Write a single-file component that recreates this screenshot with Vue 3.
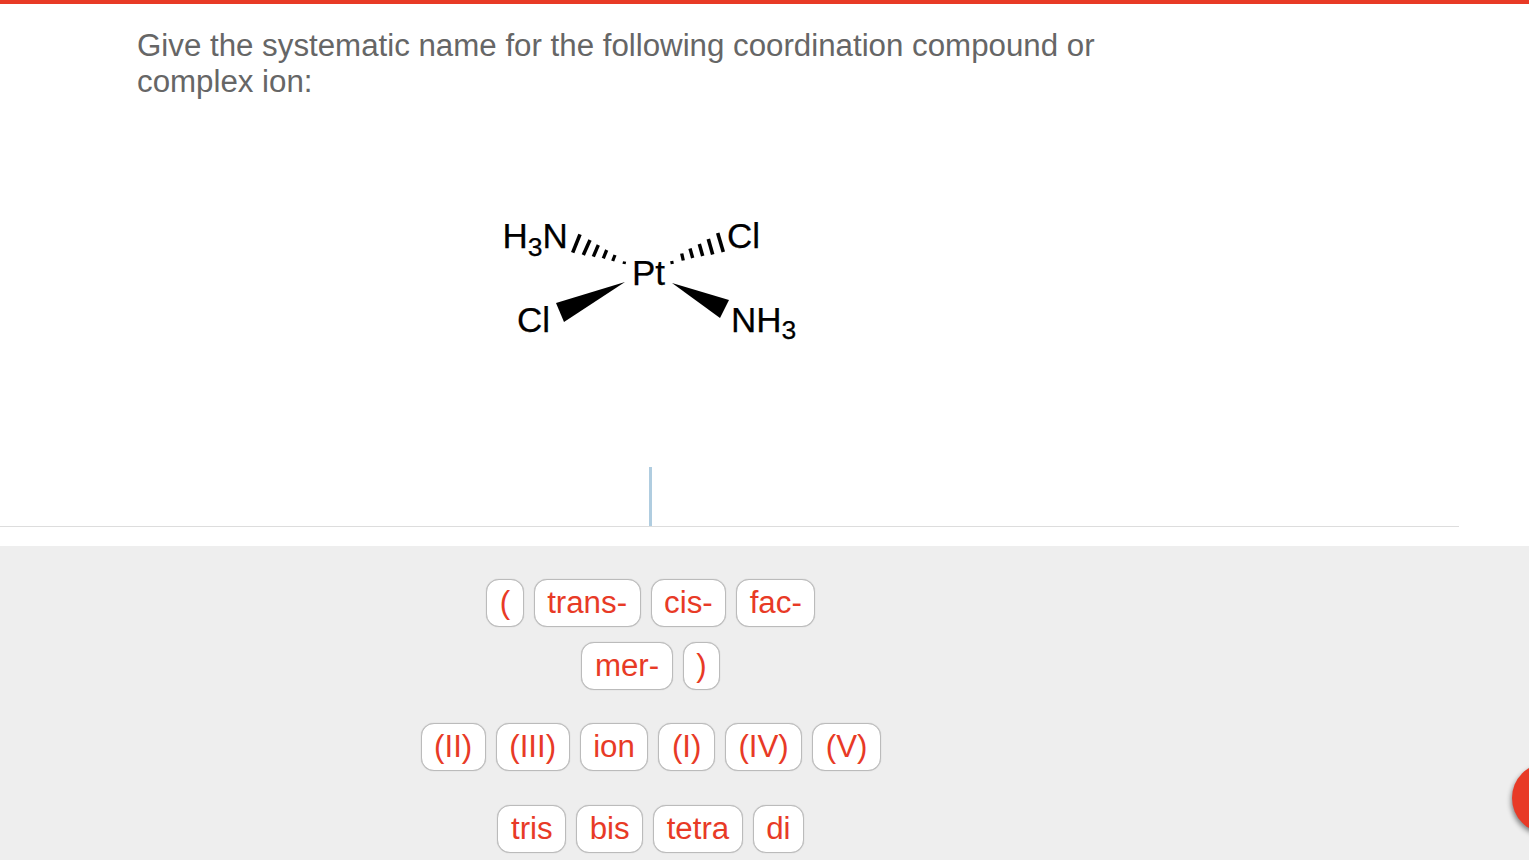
<script setup>
const rows = [
  { cls: 'r1', items: ['(', 'trans-', 'cis-', 'fac-'] },
  { cls: 'r2', items: ['mer-', ')'] },
  { cls: 'r3', items: ['(II)', '(III)', 'ion', '(I)', '(IV)', '(V)'] },
  { cls: 'r4', items: ['tris', 'bis', 'tetra', 'di'] },
]
const hashes = [
  [580, 234.3, 572.7, 252.7, 3.6], [590, 240, 583.3, 255, 3.5], [598.3, 245, 593.3, 256.7, 3.4],
  [606.7, 250, 603.3, 258.3, 3.3], [615, 255, 612.7, 261, 3.2], [624.6, 261.5, 624, 264, 3.2],
  [717.7, 233, 723.3, 252, 3.6], [708.3, 239, 712.7, 254.5, 3.6], [699.3, 244, 702.7, 256, 3.5],
  [690, 248.5, 692.7, 258, 3.4], [681.7, 253.5, 683.3, 260.5, 3.3], [671.7, 261, 672.3, 264, 3.2],
]
</script>

<template>
  <div class="page">
    <div class="topbar"></div>
    <p class="question">Give the systematic name for the following coordination compound or complex ion:</p>
    <svg class="molecule" viewBox="490 205 320 145" width="320" height="145">
      <g class="atoms">
        <text x="502.5" y="248">H<tspan class="sub" dy="8">3</tspan><tspan dy="-8">N</tspan></text>
        <text x="727" y="248">Cl</text>
        <text x="632" y="285">Pt</text>
        <text x="517" y="332">Cl</text>
        <text x="731" y="332">NH<tspan class="sub" dy="7">3</tspan></text>
      </g>
      <polygon points="625,282 556,303 564,322" />
      <polygon points="672,283 729,300 720,318" />
      <line v-for="(h, i) in hashes" :key="i" :x1="h[0]" :y1="h[1]" :x2="h[2]" :y2="h[3]" :stroke-width="h[4]" stroke="#000" />
    </svg>
    <div class="answer"><span class="cursor"></span></div>
    <div class="tray">
      <div v-for="row in rows" :key="row.cls" class="row" :class="row.cls">
        <button v-for="item in row.items" :key="item" class="chip">{{ item }}</button>
      </div>
    </div>
    <div class="fab"></div>
  </div>
</template>

<style>
html, body { margin: 0; height: 100%; overflow: hidden; background: #fff; }
</style>

<style scoped>
.page {
  position: relative;
  height: 860px;
  overflow: hidden;
  font-family: "Liberation Sans", Arial, sans-serif;
  background: #fff;
}
.topbar { height: 4px; background: #e83a26; }
.question {
  margin: 0;
  padding: 24px 0 0 137px;
  width: 1000px;
  font-size: 31.27px;
  line-height: 36px;
  color: #666;
}
.molecule { display: block; margin: 105px 0 0 490px; }
.atoms { font-size: 35px; fill: #000; stroke: #000; stroke-width: 0.25px; }
.sub { font-size: 26.5px; }
.answer {
  margin-top: 117px;
  width: 1459px;
  height: 59px;
  border-bottom: 1px solid #ddd;
  display: flex;
}
.cursor { width: 3px; margin-left: 649px; background: #b0cde0; }
.tray {
  margin-top: 19px;
  height: 314px;
  box-sizing: border-box;
  padding-top: 33px;
  background: #eee;
  width: 100%;
}
.row { display: flex; justify-content: center; gap: 10px; width: 1301.5px; }
.r2 { margin-top: 15px; }
.r3 { margin-top: 33px; }
.r4 { margin-top: 34px; }
.chip {
  height: 48px;
  box-sizing: border-box;
  padding: 0 12.5px 1px;
  border: 1px solid #bbb;
  border-radius: 13px;
  background: #fff;
  box-shadow: 0 0 1px rgba(0, 0, 0, 0.25);
  color: #e83a26;
  font-family: inherit;
  font-size: 31.27px;
  line-height: 44px;
}
.fab {
  position: absolute;
  left: 1512px;
  top: 763px;
  width: 70px;
  height: 70px;
  border-radius: 50%;
  background: #e83a26;
  box-shadow: -1px 3px 5px rgba(0, 0, 0, 0.45);
}
</style>
